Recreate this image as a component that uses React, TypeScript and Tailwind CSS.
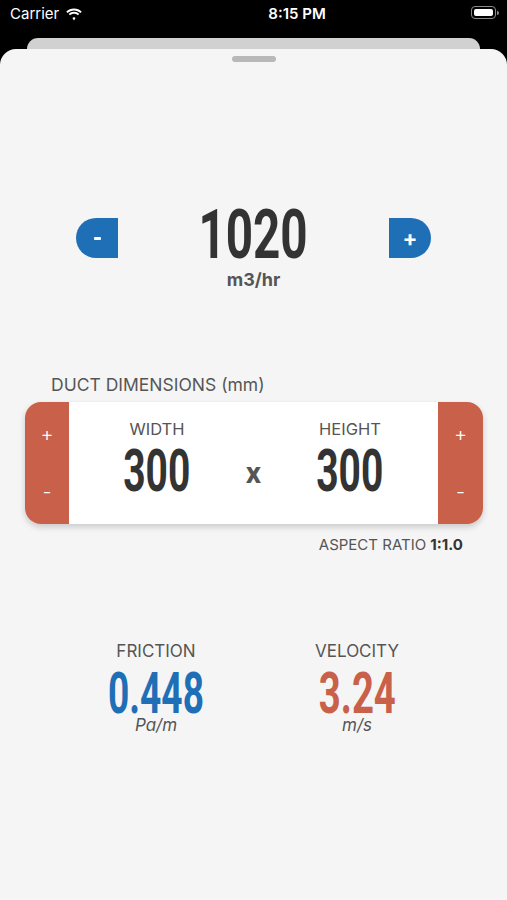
const Wifi = () => (
  <svg width="18" height="13" viewBox="0 0 17 12" fill="white">
    <path d="M8.5 2.2c2.3 0 4.4.9 6 2.4l1.3-1.3C13.9 1.4 11.3.3 8.5.3S3.1 1.4 1.2 3.3l1.3 1.3c1.6-1.5 3.7-2.4 6-2.4z" />
    <path d="M8.5 5.4c1.4 0 2.7.5 3.7 1.4l1.3-1.3C12.2 4.2 10.4 3.5 8.5 3.5s-3.7.7-5 2l1.3 1.3c1-.9 2.3-1.4 3.7-1.4z" />
    <path d="M8.5 8.6c.6 0 1.1.2 1.5.6L8.5 11.7 7 9.2c.4-.4.9-.6 1.5-.6z" />
  </svg>
);

const Battery = () => (
  <div className="flex items-center">
    <div className="w-[25px] h-[13px] rounded-[4px] border border-[#8a8a8a] p-[2px]">
      <div className="w-full h-full rounded-[2px] bg-white" />
    </div>
    <div className="w-[2px] h-[4px] rounded-r-sm bg-[#8a8a8a] ml-[1px]" />
  </div>
);

const NUM = { fontFamily: "Roboto, 'Liberation Sans', sans-serif" };

export default function App() {
  return (
    <div
      className="w-full h-[900px] bg-black flex flex-col overflow-hidden"
      style={{ fontFamily: "Inter, Roboto, 'Liberation Sans', sans-serif" }}
    >
      {/* status bar */}
      <div className="h-[38px] flex items-start justify-between pl-[10px] pr-[8px] pt-[6px] text-white text-[15px]">
        <div className="flex items-center gap-[6px] leading-[16px]">
          <span>Carrier</span>
          <Wifi />
        </div>
        <span className="font-semibold leading-[16px] pl-[40px]">8:15 PM</span>
        <Battery />
      </div>

      {/* sheet behind */}
      <div className="mx-[27px] h-[11px] bg-[#d1d1d1] rounded-t-[12px]" />

      {/* main sheet */}
      <div className="flex-1 bg-[#f5f5f5] rounded-t-[16px] flex flex-col">
        <div className="mt-[7px] mx-auto w-[44px] h-[6px] rounded-full bg-[#b8b8b8]" />

        {/* air flow stepper */}
        <div className="mt-[148px] flex justify-between items-start px-[76px]">
          <button className="mt-[8px] w-[42px] h-[40px] rounded-l-full bg-[#1f6fb6] flex items-center justify-center">
            <span className="block w-[7px] h-[3px] bg-white rounded-[1px]" />
          </button>
          <div className="flex flex-col items-center">
            <span
              className="inline-block text-[68px] leading-[0.75] font-bold text-[#333] scale-x-[0.7]"
              style={NUM}
            >
              1020
            </span>
            <span className="mt-[10px] text-[18px] leading-none font-bold text-[#555]">m3/hr</span>
          </div>
          <button className="mt-[8px] w-[42px] h-[40px] rounded-r-full bg-[#1f6fb6] flex items-center justify-center text-white text-[22px] font-bold leading-none">
            +
          </button>
        </div>

        {/* duct dimensions */}
        <div className="mt-[87px] pl-[51px] text-[17.5px] leading-none text-[#555]">
          DUCT DIMENSIONS (mm)
        </div>
        <div className="mt-[8px] ml-[25px] mr-[24px] h-[122px] rounded-[16px] overflow-hidden flex shadow-[0_3px_6px_rgba(0,0,0,0.18)]">
          <div className="w-[44px] bg-[#c8604a] flex flex-col items-center text-white">
            <span className="mt-[22px] text-[20px] font-light leading-none">+</span>
            <span className="mt-[38px] text-[20px] font-light leading-none">-</span>
          </div>
          <div className="flex-1 bg-white flex justify-between px-[38px]">
            <div className="w-[100px] flex flex-col items-center pt-[19px]">
              <span className="text-[16.5px] leading-none text-[#555]">WIDTH</span>
              <span
                className="mt-[12px] inline-block text-[59px] leading-[0.75] font-bold text-[#333] scale-x-[0.66]"
                style={NUM}
              >
                300
              </span>
            </div>
            <div className="pt-[56px] text-[30px] leading-none font-bold text-[#555]" style={NUM}>
              x
            </div>
            <div className="w-[100px] flex flex-col items-center pt-[19px]">
              <span className="text-[16.5px] leading-none text-[#555]">HEIGHT</span>
              <span
                className="mt-[12px] inline-block text-[59px] leading-[0.75] font-bold text-[#333] scale-x-[0.66]"
                style={NUM}
              >
                300
              </span>
            </div>
          </div>
          <div className="w-[45px] bg-[#c8604a] flex flex-col items-center text-white">
            <span className="mt-[22px] text-[20px] font-light leading-none">+</span>
            <span className="mt-[38px] text-[20px] font-light leading-none">-</span>
          </div>
        </div>
        <div className="mt-[13px] pr-[44px] text-right text-[15px] leading-none text-[#555]">
          ASPECT RATIO <span className="font-bold text-[#333]">1:1.0</span>
        </div>

        {/* results */}
        <div className="mt-[91px] flex pl-[76px] gap-[41px]">
          <div className="w-[160px] flex flex-col items-center">
            <span className="text-[17px] leading-none text-[#555]">FRICTION</span>
            <span
              className="mt-[12px] inline-block text-[58px] leading-[0.75] font-bold text-[#1f6fb6] scale-x-[0.64]"
              style={NUM}
            >
              0.448
            </span>
            <span className="mt-[2px] text-[17px] leading-none italic text-[#555]">Pa/m</span>
          </div>
          <div className="w-[160px] flex flex-col items-center">
            <span className="text-[17px] leading-none text-[#555]">VELOCITY</span>
            <span
              className="mt-[12px] inline-block text-[58px] leading-[0.75] font-bold text-[#c8604a] scale-x-[0.66]"
              style={NUM}
            >
              3.24
            </span>
            <span className="mt-[2px] text-[17px] leading-none italic text-[#555]">m/s</span>
          </div>
        </div>
      </div>
    </div>
  );
}
